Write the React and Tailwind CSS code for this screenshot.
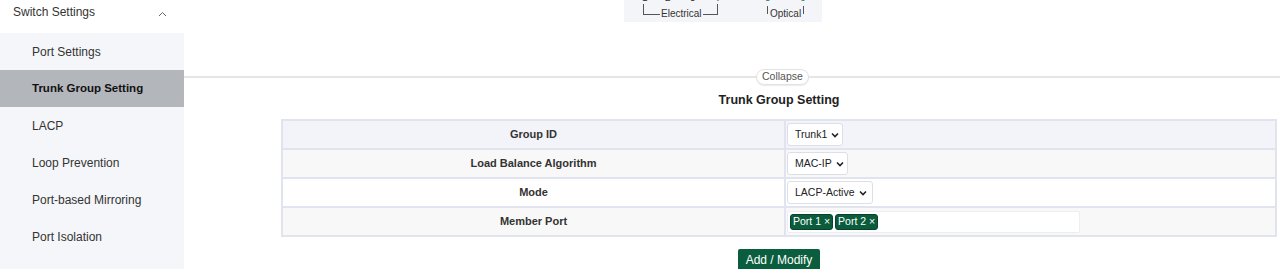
import { useState } from "react";

const menu_items = [
  "Port Settings",
  "Trunk Group Setting",
  "LACP",
  "Loop Prevention",
  "Port-based Mirroring",
  "Port Isolation",
];

function Sidebar() {
  const active = "Trunk Group Setting";
  return (
    <aside className="w-[184px] shrink-0 flex flex-col">
      <div className="h-[33px] shrink-0 flex items-center justify-between pl-[13px] pr-[17px] text-[12px] text-[#333]">
        <span className="-mt-[9px]">Switch Settings</span>
        <svg width="9" height="6" viewBox="0 0 9 6" className="-mt-[5px]">
          <path d="M1 5 L4.5 1.5 L8 5" fill="none" stroke="#666" strokeWidth="1" />
        </svg>
      </div>
      <div className="flex-1 bg-[#f5f6f9] flex flex-col">
        {menu_items.map((item) => (
          <div
            key={item}
            className={
              item === active
                ? "h-[37px] shrink-0 flex items-center pl-[32px] text-[11.5px] font-bold text-[#111] bg-[#b3b6bb]"
                : "h-[37px] shrink-0 flex items-center pl-[32px] text-[12px] text-[#333]"
            }
          >
            {item}
          </div>
        ))}
      </div>
    </aside>
  );
}

function PortDiagram() {
  return (
    <div className="ml-[440px] w-[198px] h-[22px] bg-[#f4f5f8] relative overflow-hidden text-[10px] text-[#333] whitespace-nowrap">
      {/* port numbers, mostly scrolled off the top */}
      <span className="absolute left-[18px] -top-[8px] leading-[12px]">1</span>
      <span className="absolute left-[41px] -top-[8px] leading-[12px]">2</span>
      <span className="absolute left-[66px] -top-[8px] leading-[12px]">3</span>
      <span className="absolute left-[90px] -top-[8px] leading-[12px]">4</span>
      <span className="absolute left-[141px] -top-[8px] leading-[12px] text-[#0b7a4b]">5</span>
      <span className="absolute left-[176px] -top-[8px] leading-[12px] text-[#0b7a4b]">6</span>
      <div className="absolute left-[19px] top-[4px] w-[75px] h-[11px] border-l border-r border-b border-[#555]" />
      <span className="absolute left-[36px] top-[8px] bg-[#f4f5f8] px-[1px] leading-[12px]">Electrical</span>
      <div className="absolute left-[143px] top-[6px] w-[37px] h-[8px] border-l border-r border-[#555]" />
      <span className="absolute left-[146px] top-[8px] leading-[12px]">Optical</span>
    </div>
  );
}

function Select({ value, width }) {
  return (
    <div
      className="h-[23px] flex items-center justify-between gap-[4px] whitespace-nowrap bg-white border border-[#dcdfe6] rounded-[3px] pl-[7px] pr-[5px] text-[10.5px] text-[#222]"
      style={{ width }}
    >
      <span>{value}</span>
      <svg width="8" height="6" viewBox="0 0 8 6" className="shrink-0">
        <path d="M1 1.5 L4 4.5 L7 1.5" fill="none" stroke="#222" strokeWidth="1.6" />
      </svg>
    </div>
  );
}

function Tag({ label }) {
  return (
    <span className="h-[16px] flex items-center px-[2px] rounded-[3px] bg-[#0b5c3c] text-white text-[10.5px] leading-none whitespace-nowrap border border-[#08442c]">
      {label} ×
    </span>
  );
}

export default function App() {
  const [rows] = useState([
    { label: "Group ID", bg: "bg-[#f3f4f9]", field: <Select value="Trunk1" width={56} /> },
    { label: "Load Balance Algorithm", bg: "bg-[#f8f8f8]", field: <Select value="MAC-IP" width={61} /> },
    { label: "Mode", bg: "bg-white", field: <Select value="LACP-Active" width={86} /> },
    {
      label: "Member Port",
      bg: "bg-[#f8f8f8]",
      field: (
        <div className="w-[293px] h-[22px] bg-white border border-[#eceef2] rounded-[2px] flex items-center gap-[2px] pl-[2px]">
          <Tag label="Port 1" />
          <Tag label="Port 2" />
        </div>
      ),
    },
  ]);

  return (
    <div
      className="w-[1280px] h-[269px] overflow-hidden bg-white flex items-stretch"
      style={{ fontFamily: '"Liberation Sans", Arial, sans-serif' }}
    >
      <Sidebar />
      <main className="flex-1 min-w-0">
        <PortDiagram />

        <div className="mt-[47px] h-[16px] flex items-center">
          <div className="w-[572px] h-[2px] bg-[#e6e6e6]" />
          <span className="h-[16px] px-[5px] flex items-center rounded-full bg-white border border-[#e3e3e3] shadow-[0_1px_1px_rgba(0,0,0,0.08)] text-[10.5px] text-[#555]">
            Collapse
          </span>
          <div className="flex-1 h-[2px] bg-[#e6e6e6]" />
        </div>

        <div className="pl-[97px] pr-[3px]">
          <h2 className="mt-[6px] h-[18px] text-center text-[12.5px] font-bold text-[#222] leading-[18px]">
            Trunk Group Setting
          </h2>

          <table className="mt-[10px] w-full border-collapse text-[11px]">
            <tbody>
              {rows.map((r) => (
                <tr key={r.label} className={r.bg}>
                  <td className="w-[503px] h-[29px] border-2 border-[#e1e4ee] text-center font-bold text-[#333]">
                    {r.label}
                  </td>
                  <td className="h-[29px] border-2 border-[#e1e4ee] pl-[1px]">{r.field}</td>
                </tr>
              ))}
            </tbody>
          </table>

          <div className="mt-[12px] flex justify-center">
            <button className="h-[22px] px-[8px] bg-[#0b5e3d] text-white text-[12px] rounded-[2px]">
              Add / Modify
            </button>
          </div>
        </div>
      </main>
    </div>
  );
}
